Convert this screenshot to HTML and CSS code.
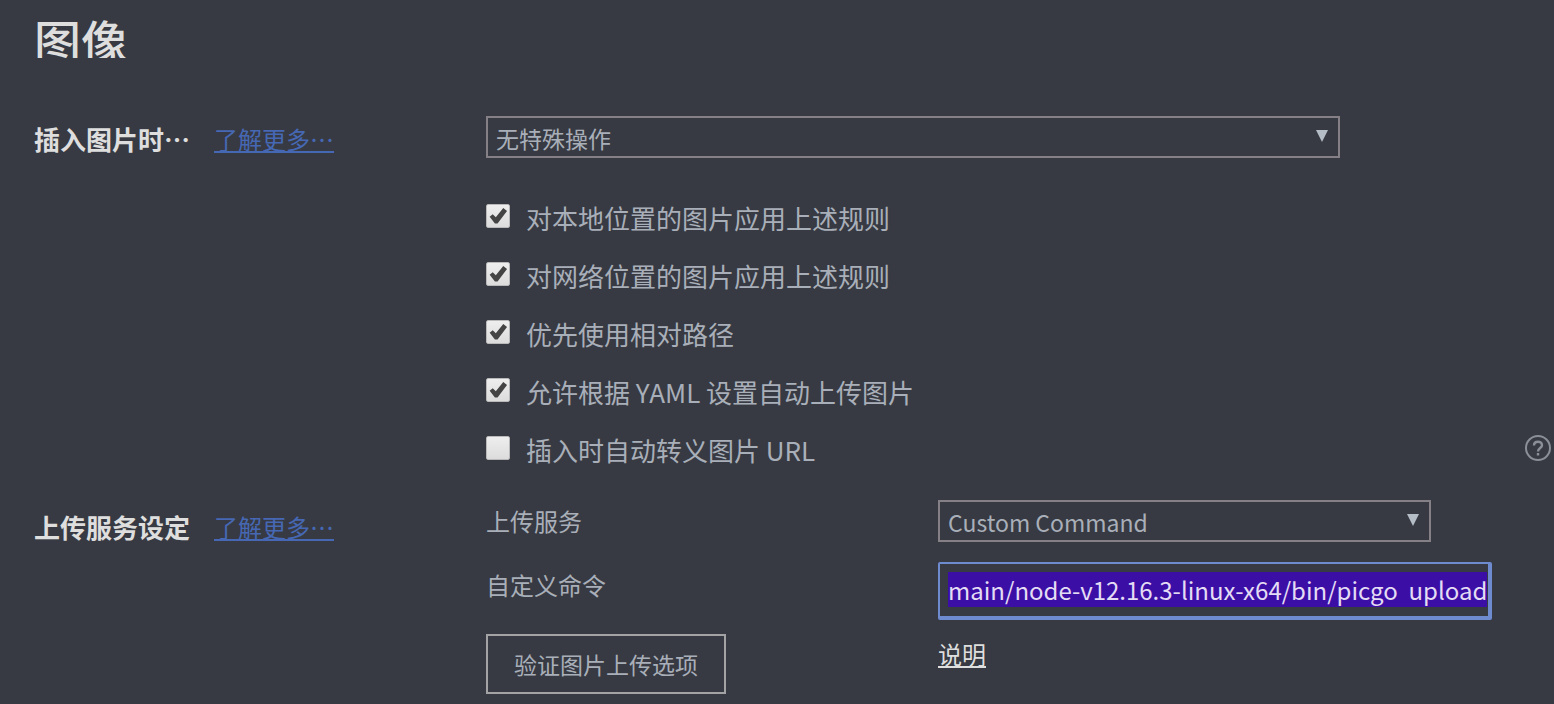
FILE: index.html
```html
<!DOCTYPE html>
<html lang="zh-CN">
<head>
    <meta charset="UTF-8">
    <meta name="viewport" content="width=device-width, initial-scale=1.0">
    <title>图像</title>
    <link rel="stylesheet" href="styles.css">
</head>
<body>
    <main class="panel">
        <h1 class="panel-title">图像</h1>

        <section class="setting">
            <div class="setting-head">
                <label class="setting-name" for="insert-action">插入图片时…</label>
                <a class="more-link" href="#">了解更多…</a>
            </div>
            <div class="setting-body">
                <div class="select-box">
                    <select id="insert-action">
                        <option>无特殊操作</option>
                    </select>
                    <svg class="arrow" viewBox="0 0 12 12"><path d="M0 0h12L6 12z"/></svg>
                </div>
                <div class="check-list">
                    <div class="check-row">
                        <input type="checkbox" id="apply-local" checked>
                        <label for="apply-local">对本地位置的图片应用上述规则</label>
                    </div>
                    <div class="check-row">
                        <input type="checkbox" id="apply-online" checked>
                        <label for="apply-online">对网络位置的图片应用上述规则</label>
                    </div>
                    <div class="check-row">
                        <input type="checkbox" id="relative-path" checked>
                        <label for="relative-path">优先使用相对路径</label>
                    </div>
                    <div class="check-row">
                        <input type="checkbox" id="yaml-upload" checked>
                        <label for="yaml-upload">允许根据 YAML 设置自动上传图片</label>
                    </div>
                    <div class="check-row">
                        <input type="checkbox" id="escape-url">
                        <label for="escape-url">插入时自动转义图片 URL</label>
                        <a class="help" href="#" aria-label="帮助">
                            <svg viewBox="0 0 26 26" fill="none" stroke="currentColor" stroke-width="2">
                                <circle cx="13" cy="13" r="12"/>
                                <path d="M9 10.500C9 5.500 17 5.500 17 10.200C17 13 13 13 13 16.500" stroke-width="2.400"/>
                                <path d="M13 18v2.500" stroke-width="2.400"/>
                            </svg>
                        </a>
                    </div>
                </div>
            </div>
        </section>

        <section class="setting">
            <div class="setting-head upload-head">
                <h2 class="setting-name">上传服务设定</h2>
                <a class="more-link" href="#">了解更多…</a>
            </div>
            <div class="setting-body upload">
                <label class="field-name" for="service">上传服务</label>
                <div class="select-box">
                    <select id="service">
                        <option>Custom Command</option>
                    </select>
                    <svg class="arrow" viewBox="0 0 12 12"><path d="M0 0h12L6 12z"/></svg>
                </div>
                <label class="field-name" for="command">自定义命令</label>
                <input type="text" class="command" id="command" value="main/node-v12.16.3-linux-x64/bin/picgo  upload">
                <button class="btn-test" type="button">验证图片上传选项</button>
                <a class="doc-link" href="#">说明</a>
            </div>
        </section>
    </main>

    <script>
        const command = document.getElementById('command');
        command.focus();
        command.select();
    </script>
</body>
</html>
```

FILE: styles.css
```css
* {
    margin: 0;
    padding: 0;
    box-sizing: border-box;
}

body {
    background-color: #373a42;
    color: #a9afb9;
    font-family: "Noto Sans CJK SC", sans-serif;
    font-size: 24px;
    line-height: 36px;
}

select,
input,
button {
    font: inherit;
    color: inherit;
    background: none;
    border-radius: 0;
}

.panel {
    padding: 16px 0 8px 34px;
}

/* the title box is shorter than its glyphs and cuts them off */
.panel-title {
    height: 42px;
    margin-bottom: 58px;
    overflow: hidden;
    font-size: 47px;
    font-weight: 500;
    line-height: 48px;
    color: #dedede;
}

.setting {
    display: grid;
    grid-template-columns: 452px 1fr;
    margin-bottom: 21px;
}

.setting:last-child {
    margin-bottom: 0;
}

.setting-head {
    display: flex;
    align-items: center;
    align-self: start;
    gap: 24px;
    padding-top: 5px;
}

.upload-head {
    padding-top: 9px;
}

.setting-name {
    font-size: 26px;
    font-weight: 700;
    color: #dedede;
}

.more-link {
    color: #4668b4;
}

.select-box {
    position: relative;
    width: 80%;
}

.select-box select {
    display: block;
    width: 100%;
    height: 42px;
    padding: 2px 36px 0 8px;
    border: 2px solid #858086;
    font-size: 23px;
    appearance: none;
    outline: none;
}

.arrow {
    position: absolute;
    top: 14px;
    right: 12px;
    width: 12px;
    height: 12px;
    fill: #b4bcc6;
    pointer-events: none;
}

.check-list {
    padding-top: 31px;
}

.check-row {
    display: flex;
    align-items: center;
    gap: 16px;
    height: 58px;
    padding-right: 3px;
    font-size: 26px;
}

.check-row input {
    width: 24px;
    height: 24px;
    margin-bottom: 4px;
    border: 1px solid #b9b9b9;
    border-radius: 2px;
    background-image: linear-gradient(#eeeeee, #dcdcdc);
    appearance: none;
}

.check-row input:checked::after {
    content: "";
    display: block;
    width: 22px;
    height: 22px;
    background-color: #444444;
    clip-path: polygon(12% 53%, 26% 42%, 40% 56%, 74% 14%, 91% 27%, 48% 84%, 36% 84%);
}

.help {
    width: 26px;
    height: 26px;
    margin-bottom: 4px;
    margin-left: auto;
    color: #8b8f98;
}

.help svg {
    display: block;
}

.upload {
    display: grid;
    grid-template-columns: 452px 1fr;
    align-items: start;
}

.field-name {
    padding-top: 3px;
}

.command {
    width: 90%;
    height: 58px;
    margin-top: 20px;
    padding: 0 0 2px 8px;
    border: 2px solid #6f8bd0;
    border-right-width: 4px;
    border-bottom-width: 4px;
    border-radius: 2px;
    outline: none;
}

.command::selection {
    color: #e4dcf4;
    background-color: #3b0fa6;
}

.field-name[for="command"] {
    padding-top: 25px;
}

.btn-test {
    justify-self: start;
    height: 60px;
    margin-top: 14px;
    padding: 0 26px;
    border: 2px solid #a3a3a5;
    font-size: 23px;
}

.doc-link {
    justify-self: start;
    padding-top: 16px;
    color: #dedede;
}
```
